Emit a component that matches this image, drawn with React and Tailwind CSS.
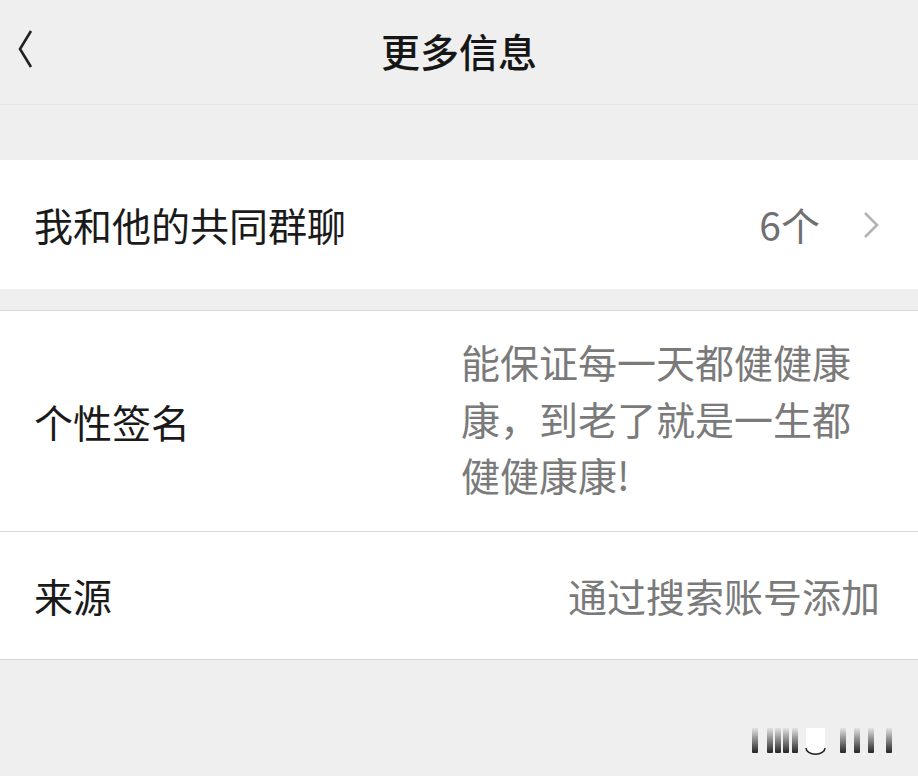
import React from "react";

const font = { fontFamily: '"Noto Sans CJK SC", "Noto Sans", sans-serif' };

const Watermark = () => (
  <svg className="absolute left-[748px] top-[724px]" width="150" height="34" viewBox="0 0 150 34">
    <defs>
      <linearGradient id="bar" x1="0" y1="0" x2="0" y2="1">
        <stop offset="0" stopColor="#000" stopOpacity="0.05" />
        <stop offset="1" stopColor="#000" stopOpacity="0.85" />
      </linearGradient>
    </defs>
    {[4, 19, 27, 35, 44, 92, 106, 120, 138].map((x) => (
      <rect key={x} x={x} y="4" width="6" height="25" rx="1" fill="url(#bar)" />
    ))}
    <path d="M58 4 V22 a9 7 0 0 0 19 0 V4 Z" fill="#fff" />
    <path d="M58 24 a9 6 0 0 0 19 0" fill="none" stroke="#222" strokeWidth="1.5" />
  </svg>
);

export default function App() {
  return (
    <div className="relative w-[918px] h-[776px] bg-[#efefef] overflow-hidden" style={font}>
      {/* header */}
      <div className="relative h-[105px] flex items-center justify-center border-b border-[#e4e4e4]">
        <svg className="absolute left-[16px] top-[28px]" width="20" height="42" viewBox="0 0 20 42">
          <path d="M15 3 L4 21 L15 39" fill="none" stroke="#222" strokeWidth="2.6" strokeLinejoin="miter" />
        </svg>
        <h1 className="text-[39px] font-medium text-[#161616] leading-none -mt-[4px]">更多信息</h1>
      </div>

      <div className="h-[55px]" />

      {/* common groups */}
      <div className="h-[129px] bg-white flex items-center pl-[34px] pr-[38px]">
        <span className="text-[39px] text-[#1a1a1a] leading-none">我和他的共同群聊</span>
        <span className="ml-auto text-[39px] text-[#707070] leading-none">6个</span>
        <svg className="ml-[42px]" width="18" height="30" viewBox="0 0 18 30">
          <path d="M3 3 L15 15 L3 27" fill="none" stroke="#b3b3b3" strokeWidth="2.6" />
        </svg>
      </div>

      <div className="h-[22px] border-b border-[#d9d9d9]" />

      {/* signature */}
      <div className="h-[221px] bg-white flex items-center pl-[34px] pr-[38px] border-b border-[#dadada]">
        <span className="text-[39px] text-[#1a1a1a] leading-none">个性签名</span>
        <p className="ml-auto w-[419px] text-[39px] leading-[56.5px] text-[#7a7a7a] -mt-[6px]">
          能保证每一天都健健康康，到老了就是一生都健健康康!
        </p>
      </div>

      {/* source */}
      <div className="h-[128px] bg-white flex items-center pl-[34px] pr-[38px] border-b border-[#d6d6d6]">
        <span className="text-[39px] text-[#1a1a1a] leading-none">来源</span>
        <span className="ml-auto text-[39px] text-[#7a7a7a] leading-none">通过搜索账号添加</span>
      </div>

      <Watermark />
    </div>
  );
}
